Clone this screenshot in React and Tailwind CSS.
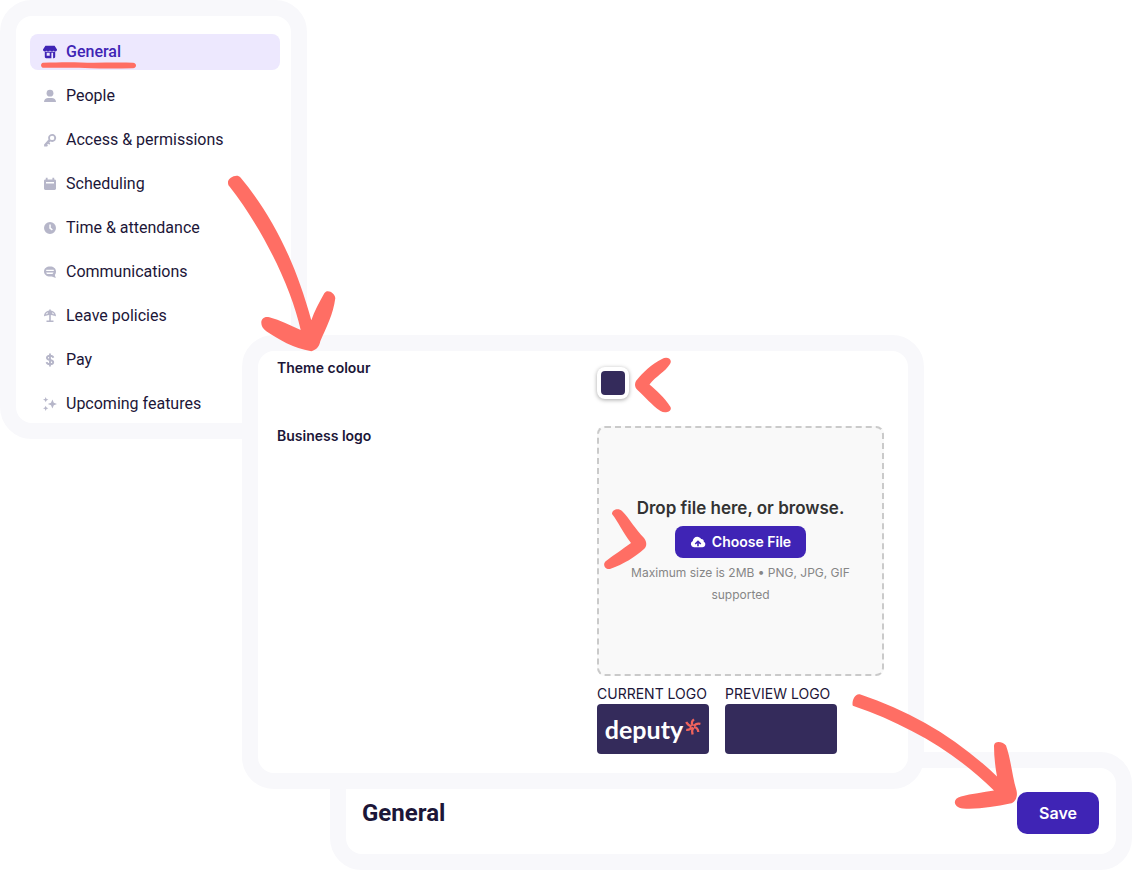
import React from "react";

const CORAL = "#ff6e64";

const icons = {
  store: (
    <>
      <path d="M2.400 .8h9.200L14 4.400c.1 1.300-.7 2.100-1.700 2.100-.8 0-1.500-.4-1.800-1-.3.6-1 1-1.700 1-.8 0-1.400-.4-1.800-1-.4.6-1 1-1.800 1-.7 0-1.400-.4-1.700-1-.3.6-1 1-1.800 1-1 0-1.800-.8-1.700-2.100z" />
      <path
        fillRule="evenodd"
        d="M1.800 6.800h10.400v5c0 .8-.5 1.400-1.300 1.400H3.100c-.8 0-1.300-.6-1.300-1.400zM3.700 7.800v3h3v-3zM8.400 7.800v5.400h1.700V7.800z"
      />
    </>
  ),
  person: (
    <>
      <circle cx="7" cy="4.200" r="3.400" />
      <path d="M1 13c0-2.500 2-4 4.200-4h3.600C11 9 13 10.500 13 13z" />
    </>
  ),
  key: (
    <path
      fillRule="evenodd"
      d="M9.100.9a4 4 0 1 1-1.700 7.600L6.300 9.600l1 1-1 1.100-1.100-1-1.100 1.100.9.900-1 .9H1.100v-2L5.500 6.500A4 4 0 0 1 9.100.9zm0 1.800a2.200 2.200 0 1 0 0 4.400 2.200 2.200 0 0 0 0-4.400z"
    />
  ),
  calendar: (
    <path
      fillRule="evenodd"
      d="M2.800 .8h1.800v1.700h4.800V.8h1.800v1.700h.4c.8 0 1.400.6 1.400 1.400v7.700c0 .8-.6 1.400-1.400 1.400H2.400C1.600 13 1 12.400 1 11.600V3.900c0-.8.6-1.400 1.400-1.400h.4zM3 4.900v1.600h8V4.900z"
    />
  ),
  clock: (
    <path
      fillRule="evenodd"
      d="M7 1a6 6 0 1 1 0 12A6 6 0 0 1 7 1zM6.300 3.500v4l2.600 1.900.9-1.200-2-1.400V3.500z"
    />
  ),
  chat: (
    <path
      fillRule="evenodd"
      d="M7 1.500c3.600 0 6 2 6 5 0 1.500-.5 2.600-1.200 3.500l1 3-4-1.500C4 12.200 1 9.700 1 6.500c0-3 2.500-5 6-5zM3.200 4.700v1.200h7.600V4.700zM3.200 7.400c.2 1 .8 1.500 1.800 1.500h3.500c1 0 1.600-.5 2-1.500z"
    />
  ),
  umbrella: (
    <path
      fillRule="evenodd"
      d="M6.200.6h1.600v.8c3.200.4 5.200 2.800 5.200 6-.6-.6-1.300-.8-2-.5-.5-.7-1.300-.9-2-.5-.4-.3-.8-.4-1.200-.3v5.300h2.700V13h-7v-1.600h2.700V6.100c-.4-.1-.8 0-1.200.3-.7-.4-1.500-.2-2 .5-.7-.3-1.400-.1-2 .5 0-3.200 2-5.600 5.200-6zM5 3.200C3.800 3.600 3 4.500 2.900 5.600c.7-.4 1.300-.5 1.700-.8zM9 3.200l.4 1.600c.6.3 1.100.4 1.700.8C11 4.500 10.200 3.600 9 3.200z"
    />
  ),
  dollar: (
    <path
      fill="none"
      stroke="currentColor"
      strokeWidth="1.900"
      d="M7 .5v13M10.300 4.700C10 3.300 8.700 2.800 7 2.800c-1.900 0-3.100.7-3.100 2 0 3.200 6.300 1.200 6.300 4.400 0 1.300-1.300 2-3.200 2-1.800 0-3.100-.6-3.400-2.100"
    />
  ),
  sparkles: (
    <path d="M9.400 2.600l1.400 3.100 3.200 1.300-3.200 1.300-1.400 3.100L8 8.300 4.800 7 8 5.700zM2.700 0l.8 1.900 1.900.7-1.900.8-.8 1.900-.8-1.900L0 2.600l1.900-.7zM2.700 8.700l.8 1.900 1.900.7-1.900.8-.8 1.900-.8-1.900-1.900-.8 1.900-.7z" />
  ),
};

const navItems = [
  { label: "General", icon: "store", active: true },
  { label: "People", icon: "person" },
  { label: "Access & permissions", icon: "key" },
  { label: "Scheduling", icon: "calendar" },
  { label: "Time & attendance", icon: "clock" },
  { label: "Communications", icon: "chat" },
  { label: "Leave policies", icon: "umbrella" },
  { label: "Pay", icon: "dollar" },
  { label: "Upcoming features", icon: "sparkles" },
];

function NavItem({ label, icon, active }) {
  return (
    <li>
      <a
        href="#"
        aria-current={active ? "page" : undefined}
        className={
          active
            ? "relative flex h-9 items-center gap-2 rounded-lg bg-[#ede8fe] px-3 font-medium text-[#3f24b5]"
            : "relative flex h-9 items-center gap-2 rounded-lg px-3 text-[#1c1638]"
        }
      >
        <svg
          viewBox="0 0 14 14"
          fill="currentColor"
          aria-hidden="true"
          className={active ? "size-4 p-px" : "size-4 p-px text-[#b6b6c9]"}
        >
          {icons[icon]}
        </svg>
        {label}
        {active && (
          <svg
            viewBox="0 0 95 7"
            fill={CORAL}
            aria-hidden="true"
            className="absolute left-[11px] top-7 h-[7px] w-[95px]"
          >
            <path d="M2 .8C18 .2 28 0 40 .5c16 .6 36-.4 52 .3 4 .2 4 5.400 0 5.400-14 .2-28 .4-42 0C34 5.600 18 6 2 5.800-.6 5.400-.6 1.200 2 .8z" />
          </svg>
        )}
      </a>
    </li>
  );
}

function SettingsNav() {
  return (
    <nav
      aria-label="Settings"
      className="w-[307px] rounded-[32px] border-16 border-[#f8f8fb] bg-white pt-[18px] pr-[11px] pb-px pl-[14px] font-['Roboto','Inter',sans-serif]"
    >
      <ul className="flex flex-col gap-2">
        {navItems.map((item) => (
          <NavItem key={item.label} {...item} />
        ))}
      </ul>
    </nav>
  );
}

function DeputyLogo() {
  return (
    <div className="flex h-[50px] w-28 items-center justify-center gap-0.5 rounded bg-[#342b5b]">
      <span className="font-['Lato','Noto_Sans',sans-serif] text-[25px] leading-8 font-bold text-white">
        deputy
      </span>
      <svg
        viewBox="0 0 16 18"
        fill="none"
        stroke="#f0635c"
        strokeWidth="2.300"
        aria-hidden="true"
        className="mb-1 h-[18px] w-4"
      >
        <path d="M7.900 7.600C5.900 5.300 7 2.800 9 1.300M6.600 8.300C5 7.900 2.600 6.600 1.200 4M6.200 9c-.6 2.200-2.600 3.100-5 2.800M8.400 9.600c-1.400 1.700-1.600 3.900-.8 6.900M9 9.200c2.200.2 4 1.800 4.300 4.800M9 8.200c1.200-2.100 3.600-3 6.400-2.400" />
      </svg>
    </div>
  );
}

function DropZone() {
  return (
    <div className="relative flex h-[250px] flex-col items-center justify-center rounded-lg border-2 border-dashed border-[#cacaca] bg-[#f9f9f9] px-6 pb-0.5 text-center">
      <p className="mb-1 text-[17px] leading-7 font-semibold text-[#333]">
        Drop file here, or browse.
      </p>
      <button
        type="button"
        className="mb-1 flex h-8 items-center gap-1.5 rounded-lg bg-[#3f24b5] px-[15px] text-sm font-semibold text-white"
      >
        <svg viewBox="0 0 16 16" aria-hidden="true" className="size-4">
          <path
            fill="currentColor"
            fillRule="evenodd"
            d="M4 13.200a3.300 3.300 0 0 1-1.200-6.300C3 4.500 4.900 2.800 7.200 2.800c1.700 0 3.100.9 3.900 2.300 1.700-.1 2.800 1 2.700 2.600 1 .4 1.500 1.400 1.500 2.500 0 1.700-1.300 3-3 3zM8 6.300L4.700 9.600l1 1L7.200 9.300v3h1.600v-3l1.500 1.300 1-1z"
          />
        </svg>
        Choose File
      </button>
      <p className="text-xs leading-[22px] text-[#868686]">
        Maximum size is 2MB • PNG, JPG, GIF supported
      </p>
      <svg
        viewBox="603 508 44 62"
        fill={CORAL}
        aria-hidden="true"
        className="absolute top-20 left-1 h-[62px] w-11"
      >
        <path d="M612 514c0-5 7-6 10-3 8 8 13 18 22 27 3 4 3 8 0 11-9 8-20 15-34 20-5 1-8-5-4-8 9-7 17-12 25-18-9-12-12-20-19-29z" />
      </svg>
    </div>
  );
}

function BrandingPanel() {
  return (
    <section className="relative z-10 -mt-[104px] mr-[208px] ml-[242px] grid grid-cols-[320px_1fr] rounded-[32px] border-16 border-[#f8f8fb] bg-white pr-6 pb-[19px] pl-[19px] text-sm text-[#1c1638]">
      <label htmlFor="theme" className="pt-[7px] font-semibold">
        Theme colour
      </label>
      <div className="relative h-[75px] pt-4">
        <input
          id="theme"
          type="color"
          defaultValue="#342b5b"
          className="block size-8 appearance-none rounded-lg border-0 bg-white p-1 shadow-[0_1px_4px_rgba(0,0,0,0.35)] [&::-webkit-color-swatch]:rounded [&::-webkit-color-swatch]:border-0 [&::-webkit-color-swatch-wrapper]:p-0"
        />
        <svg
          viewBox="634 356 38 58"
          fill={CORAL}
          aria-hidden="true"
          className="absolute top-[5px] left-[37px] h-[58px] w-[38px]"
        >
          <path d="M636 381c7-9 16-17 26-22 5-3 11 0 8 5-5 8-14 12-20.500 20.500 7 6 15 13 21 22.500 2 4-5 7-10 4-9-6-15-14-23-21-3-3-3-6-1.500-9z" />
        </svg>
      </div>

      <h2 className="font-semibold">Business logo</h2>
      <div>
        <DropZone />
        <div className="mt-2 flex gap-4">
          <figure className="w-28">
            <figcaption className="whitespace-nowrap leading-5">
              CURRENT LOGO
            </figcaption>
            <DeputyLogo />
          </figure>
          <figure className="w-28">
            <figcaption className="whitespace-nowrap leading-5">
              PREVIEW LOGO
            </figcaption>
            <div className="h-[50px] rounded bg-[#342b5b]" />
          </figure>
        </div>
      </div>

      <svg
        viewBox="226 174 112 178"
        fill={CORAL}
        aria-hidden="true"
        className="absolute -top-[177px] -left-8 h-[178px] w-28"
      >
        <path d="M228 182c0-4 9-9 12.500-4.500C270 213 294 257 311.300 320.300c3-9 8-18 13-27 3-5 11 0 11 5-2 16-9 29-15 43-1 6-5 9-9 10-18-3-33-12-45-20-8-6-6-16 3-14 11 3 21 8 31.400 12.700C291 286 262 228 229.500 186.500c-1.500-1.500-1.500-3-1.500-4.500z" />
      </svg>
    </section>
  );
}

function SaveBar() {
  return (
    <header className="-mt-[37px] ml-[330px] flex items-center justify-between rounded-[32px] border-16 border-[#f8f8fb] bg-white pt-6 pr-[17px] pb-5 pl-4">
      <h1 className="font-['Roboto','Inter',sans-serif] text-2xl font-bold text-[#1c1638]">
        General
      </h1>
      <div className="relative z-20">
        <button
          type="button"
          className="h-[42px] w-[82px] rounded-[10px] bg-[#3f24b5] text-base font-semibold text-white"
        >
          Save
        </button>
        <svg
          viewBox="851 693 167 117"
          fill={CORAL}
          aria-hidden="true"
          className="absolute right-[81px] -top-[99px] h-[117px] w-[167px]"
        >
          <path d="M852.500 704c0-5 3-11 8-9.500C911 711 958 739 997 776.500c-2-11-3-21-3-31 1-6 10-3 12 0 5 14 6 30 10.500 45 1.500 6-1 12-6.500 13-15 3-31 6-47 5-10-1-11-10-2-12 11-3 22-4 33-6C956 753 909 725 853.500 706c-1-.3-1-1-1-2z" />
        </svg>
      </div>
    </header>
  );
}

export default function App() {
  return (
    <main className="bg-white font-['Inter','Liberation_Sans',sans-serif]">
      <SettingsNav />
      <BrandingPanel />
      <SaveBar />
    </main>
  );
}
